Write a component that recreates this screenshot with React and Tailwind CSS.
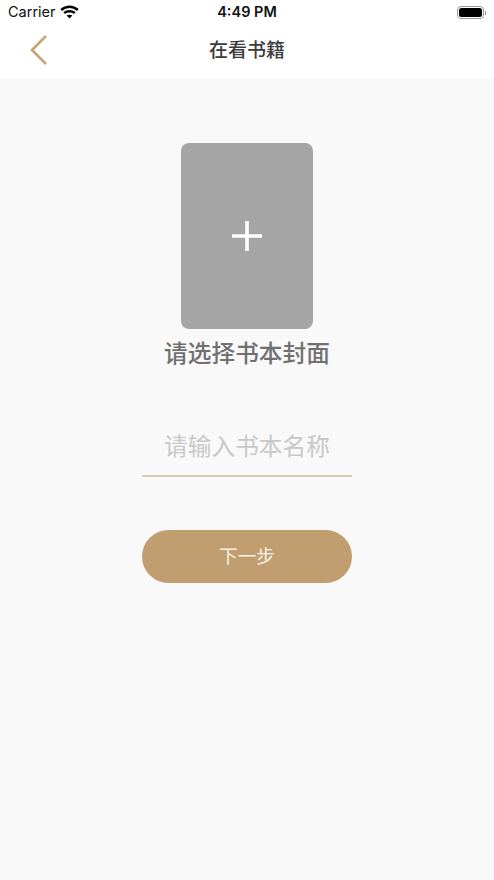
export default function App() {
  return (
    <div className="w-[494px] h-[880px] flex flex-col bg-[#f9f9f9] overflow-hidden font-['Liberation_Sans','Noto_Sans_CJK_SC',sans-serif]">
      <div className="h-[78px] bg-white flex flex-col">
        <div className="h-[25px] flex items-center justify-between pl-[8px] pr-[8px] text-[#111]">
          <div className="flex items-center gap-[5px] w-[120px]">
            <span className="text-[14.5px] leading-none font-['Inter',sans-serif]">Carrier</span>
            <svg className="-ml-[1px] -mt-[2px]" width="19" height="14" viewBox="0 0 19 14" fill="none" stroke="#000" strokeWidth="2.5">
              <path d="M1.2 5 C6 .6 13 .6 17.8 5" />
              <path d="M4.2 8 C7 5.6 12 5.6 14.8 8" />
              <path d="M9.5 13.6 L6.6 10.6 C8.2 9.4 10.8 9.4 12.4 10.6 Z" fill="#000" stroke="none" />
            </svg>
          </div>
          <span className="text-[14.5px] leading-none font-semibold font-['Inter',sans-serif]">4:49 PM</span>
          <div className="w-[120px] flex justify-end items-center">
            <div className="w-[27px] h-[13px] rounded-[4px] border border-[#9a9a9a] p-[1px] flex">
              <div className="flex-1 bg-black rounded-[2.5px]" />
            </div>
            <div className="w-[1.5px] h-[4px] bg-[#9a9a9a] ml-[0.5px]" />
          </div>
        </div>
        <div className="flex-1 relative flex items-center justify-center pb-[2px]">
          <svg className="absolute left-[29px] top-[9px]" width="19" height="32" viewBox="0 0 19 32" fill="none" stroke="#c4a574" strokeWidth="2.6">
            <path d="M17 2 L3 16 L17 30" />
          </svg>
          <span className="text-[19px] leading-none font-medium text-[#3c3c3c]">在看书籍</span>
        </div>
      </div>
      <div className="flex flex-col items-center pt-[65px]">
        <div className="w-[132px] h-[186px] rounded-[8px] bg-[#a5a5a5] flex items-center justify-center">
          <svg width="32" height="32" viewBox="0 0 32 32" stroke="#fff" strokeWidth="3.6">
            <path d="M1 16 H31 M16 1 V31" />
          </svg>
        </div>
        <p className="mt-[11px] text-[23.7px] leading-[28px] font-medium text-[#707070]">请选择书本封面</p>
        <div className="mt-[59px] w-[210px] h-[50px] pt-[6px] border-b-2 border-[#d9c9ae] flex justify-center">
          <span className="text-[23.7px] leading-[28px] text-[#c8c8c8]">请输入书本名称</span>
        </div>
        <button className="mt-[53px] w-[210px] h-[53px] pt-[2px] rounded-full bg-[#c09e70] text-[18.7px] text-[#f8f2e6] flex items-center justify-center">下一步</button>
      </div>
    </div>
  );
}
